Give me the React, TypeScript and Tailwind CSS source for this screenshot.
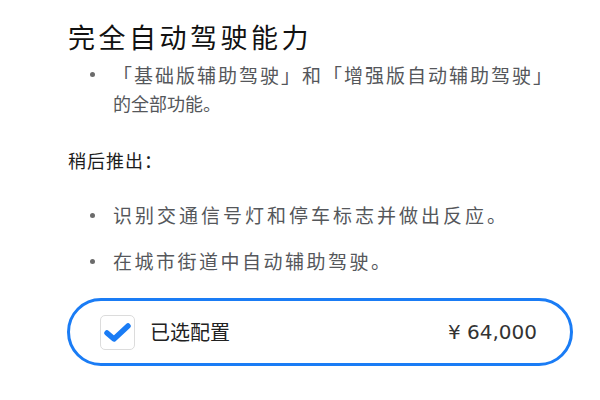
export default function App() {
  return (
    <div
      className="w-[600px] h-[400px] bg-white pl-[68px] pt-[17px] overflow-hidden"
      style={{ fontFamily: '"Noto Sans CJK SC", "Noto Sans", sans-serif' }}
    >
      <h1 className="text-[27px] leading-[40px] tracking-[3.5px] text-[#111] font-normal">
        完全自动驾驶能力
      </h1>

      <ul className="mt-[3px]">
        <li className="flex items-start">
          <span className="mt-[12px] ml-[22px] w-[5px] h-[5px] rounded-full bg-[#6b6b6b] shrink-0" />
          <div className="ml-[18px] leading-[29px] text-[#55575b]">
            <span className="block text-[19px] tracking-[2px] whitespace-nowrap">
              「基础版辅助驾驶」和「增强版自动辅助驾驶」
            </span>
            <span className="block text-[18px]">的全部功能。</span>
          </div>
        </li>
      </ul>

      <p className="mt-[28px] text-[18px] leading-[28px] tracking-[1px] text-[#1c1c1c]">
        稍后推出：
      </p>

      <ul className="mt-[27px] flex flex-col gap-[18px]">
        <li className="flex items-start">
          <span className="mt-[12px] ml-[22px] w-[5px] h-[5px] rounded-full bg-[#6b6b6b] shrink-0" />
          <span className="ml-[18px] text-[19px] leading-[28px] tracking-[3px] text-[#55575b] whitespace-nowrap">
            识别交通信号灯和停车标志并做出反应。
          </span>
        </li>
        <li className="flex items-start">
          <span className="mt-[12px] ml-[22px] w-[5px] h-[5px] rounded-full bg-[#6b6b6b] shrink-0" />
          <span className="ml-[18px] text-[19px] leading-[28px] tracking-[2.5px] text-[#55575b] whitespace-nowrap">
            在城市街道中自动辅助驾驶。
          </span>
        </li>
      </ul>

      <div className="mt-[23px] -ml-px w-[506px] h-[68px] rounded-full border-[3px] border-[#1a7cf5] flex items-center pl-[30px] pr-[33px]">
        <div className="w-[35px] h-[35px] rounded-[5px] border border-[#dcdcdc] bg-white flex items-center justify-center">
          <svg width="27" height="19" viewBox="0 0 27 19" fill="none">
            <path
              d="M3 10 L10 16 L24 3"
              stroke="#1a7cf5"
              strokeWidth="5.5"
              strokeLinecap="round"
              strokeLinejoin="round"
            />
          </svg>
        </div>
        <span className="ml-[15px] text-[20px] leading-none text-[#222]">已选配置</span>
        <span
          className="ml-auto text-[20px] leading-none text-[#333]"
          style={{ fontFamily: '"DejaVu Sans", "Noto Sans CJK SC", sans-serif' }}
        >
          ¥ 64,000
        </span>
      </div>
    </div>
  );
}
